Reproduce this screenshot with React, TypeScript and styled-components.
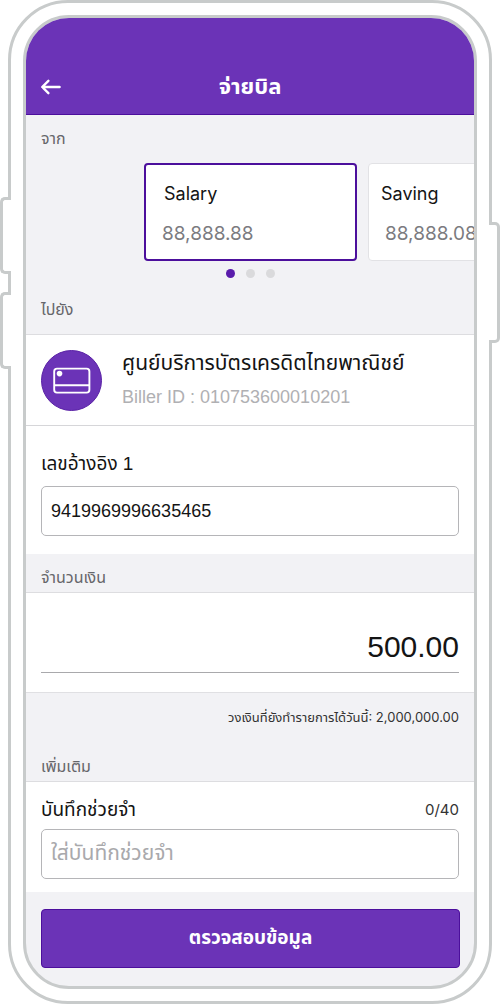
import React, { useState } from "react";
import styled, { createGlobalStyle } from "styled-components";

const purple = "#6b33b7";
const deepPurple = "#4c0f9c";
const frameGray = "#c8cbcb";
const numeric = `Inter, "Noto Sans Thai", sans-serif`;

const GlobalStyle = createGlobalStyle`
  *, *::before, *::after { box-sizing: border-box; }
  body {
    margin: 0;
    background: #fff;
    color: #141414;
    font-family: "Liberation Sans", "Noto Sans Thai", sans-serif;
  }
  button, input { font: inherit; color: inherit; }
  h1, h2, p { margin: 0; font-weight: 400; }
`;

const Stage = styled.div`
  padding: 0 8px;
`;

const Phone = styled.div`
  position: relative;
  padding: 12px;
  border: 3px solid ${frameGray};
  border-radius: 60px;
  background: #fff;
`;

const SideKey = styled.span<{ $side: "left" | "right"; $top: number; $height: number }>`
  position: absolute;
  top: ${(p) => p.$top}px;
  ${(p) => p.$side}: -11px;
  width: 11px;
  height: ${(p) => p.$height}px;
  background: #fff;
  border: 3px solid ${frameGray};
  border-${(p) => (p.$side === "left" ? "right" : "left")}: 0;
  border-radius: ${(p) => (p.$side === "left" ? "5px 0 0 5px" : "0 5px 5px 0")};
`;

const Screen = styled.main`
  overflow: hidden;
  border: 3px solid ${frameGray};
  border-radius: 46px;
  background: #f2f2f5;
`;

const Header = styled.header`
  display: grid;
  grid-template-columns: 40px 1fr 40px;
  align-items: center;
  height: 97px;
  padding: 42px 6px 0;
  border-bottom: 1px solid ${deepPurple};
  background: ${purple};
  color: #fff;
`;

const BackButton = styled.button`
  display: flex;
  padding: 8px;
  border: 0;
  background: none;
`;

const Title = styled.h1`
  text-align: center;
  font-size: 22px;
  line-height: 32px;
  font-weight: 700;
`;

const SectionTitle = styled.h2<{ $height: number; $bottom?: number }>`
  display: flex;
  align-items: flex-end;
  height: ${(p) => p.$height}px;
  padding: 0 15px ${(p) => p.$bottom ?? 4}px;
  font-size: 16px;
  line-height: 20px;
  color: #66666a;
`;

const Carousel = styled.div`
  display: flex;
  gap: 11px;
  padding-left: calc(50% - 106px);
  overflow: hidden;
`;

const Account = styled.button<{ $active?: boolean }>`
  flex: 0 0 213px;
  height: 98px;
  padding: ${(p) => (p.$active ? "3px 16px 0" : "3px 10px 0")};
  border: ${(p) => (p.$active ? `2px solid ${deepPurple}` : "1px solid #e2e2e5")};
  border-radius: 4px;
  background: #fff;
  font-family: ${numeric};
  text-align: left;
`;

const AccountName = styled.span`
  display: block;
  padding-left: 2px;
  font-size: 18px;
  line-height: 40px;
`;

const Balance = styled.span<{ $indent?: boolean }>`
  display: block;
  padding-left: ${(p) => (p.$indent ? 6 : 0)}px;
  font-size: 19px;
  line-height: 40px;
  color: #7b7b7f;
`;

const Dots = styled.div`
  display: flex;
  justify-content: center;
  gap: 11px;
  padding-top: 8px;
`;

const Dot = styled.span<{ $active?: boolean }>`
  width: 9px;
  height: 9px;
  border-radius: 50%;
  background: ${(p) => (p.$active ? "#5a1cab" : "#dadadc")};
`;

const Panel = styled.section`
  border-top: 1px solid #dddde0;
  background: #fff;
`;

const Biller = styled.div`
  display: flex;
  align-items: center;
  gap: 20px;
  height: 91px;
  padding: 0 15px;
  border-bottom: 1px solid #d6d6d9;
`;

const BillerName = styled.p`
  font-size: 21px;
  line-height: 34px;
  white-space: nowrap;
`;

const BillerId = styled.p`
  font-size: 18px;
  line-height: 34px;
  color: #b0b0b3;
  white-space: nowrap;
`;

const Field = styled.div<{ $top: number; $bottom: number }>`
  padding: ${(p) => p.$top}px 15px ${(p) => p.$bottom}px;
`;

const LabelRow = styled.div<{ $gap: number }>`
  display: flex;
  justify-content: space-between;
  align-items: center;
  height: 34px;
  margin-bottom: ${(p) => p.$gap}px;
`;

const Label = styled.label`
  font-size: 19px;
  line-height: 34px;
`;

const Counter = styled.span`
  font-family: ${numeric};
  font-size: 15px;
  line-height: 34px;
  color: #333;
`;

const TextInput = styled.input`
  display: block;
  width: 100%;
  height: 50px;
  padding: 0 9px;
  border: 1px solid #b5b5b8;
  border-radius: 5px;
  background: #fff;
  font-size: 18px;
  &::placeholder { color: #a9a9ac; opacity: 1; font-size: 21px; }
`;

const AmountBox = styled.div`
  padding: 0 15px 19px;
  border-bottom: 1px solid #e0e0e3;
`;

const Amount = styled.input`
  display: block;
  width: 100%;
  height: 80px;
  padding: 28px 0 0;
  border: 0;
  border-bottom: 1px solid #a9a9ac;
  background: none;
  font-size: 30px;
  text-align: right;
`;

const Limit = styled.p`
  padding: 14px 15px 0;
  font-family: ${numeric};
  font-size: 13px;
  line-height: 20px;
  text-align: right;
  color: #333;
`;

const Footer = styled.footer`
  padding: 17px 14px 18px 15px;
`;

const Submit = styled.button`
  display: block;
  width: 100%;
  height: 59px;
  border: 1px solid ${deepPurple};
  border-radius: 4px;
  background: ${purple};
  color: #fff;
  font-size: 19px;
  font-weight: 700;
`;

function BackArrow() {
  return (
    <svg width="22" height="18" viewBox="0 0 22 18" fill="none" stroke="#fff" strokeWidth="2.4" strokeLinecap="round" strokeLinejoin="round" aria-hidden="true">
      <path d="M19.600 9H2.500M8.400 2.800 2.200 9l6.200 6.200" />
    </svg>
  );
}

function CardBadge() {
  return (
    <svg width="61" height="61" viewBox="0 0 61 61" fill="none" aria-hidden="true">
      <circle cx="30.500" cy="30.500" r="30" fill={purple} stroke="#5a22a6" />
      <rect x="13.200" y="18.600" width="35.200" height="24" rx="2.800" stroke="#fff" strokeWidth="1.900" />
      <path d="M13.500 35.300h34.600" stroke="#fff" strokeWidth="1.900" />
      <circle cx="18.500" cy="23.600" r="2.800" fill="#fff" />
    </svg>
  );
}

export default function App() {
  const [reference, setReference] = useState("9419969996635465");
  const [amount, setAmount] = useState("500.00");
  const [memo, setMemo] = useState("");

  return (
    <>
      <GlobalStyle />
      <Stage>
        <Phone>
          <SideKey $side="left" $top={194} $height={77} />
          <SideKey $side="left" $top={289} $height={77} />
          <SideKey $side="right" $top={219} $height={121} />
          <Screen>
            <Header>
              <BackButton type="button" aria-label="ย้อนกลับ"><BackArrow /></BackButton>
              <Title>จ่ายบิล</Title>
            </Header>

            <SectionTitle $height={48} $bottom={14}>จาก</SectionTitle>
            <Carousel>
              <Account type="button" $active>
                <AccountName>Salary</AccountName>
                <Balance>88,888.88</Balance>
              </Account>
              <Account type="button">
                <AccountName>Saving</AccountName>
                <Balance $indent>88,888.08</Balance>
              </Account>
            </Carousel>
            <Dots>
              <Dot $active />
              <Dot />
              <Dot />
            </Dots>
            <SectionTitle $height={56} $bottom={14}>ไปยัง</SectionTitle>

            <Panel>
              <Biller>
                <CardBadge />
                <div>
                  <BillerName>ศูนย์บริการบัตรเครดิตไทยพาณิชย์</BillerName>
                  <BillerId>Biller ID : 010753600010201</BillerId>
                </div>
              </Biller>
              <Field $top={21} $bottom={18}>
                <LabelRow $gap={5}><Label htmlFor="reference">เลขอ้างอิง 1</Label></LabelRow>
                <TextInput id="reference" value={reference} onChange={(e) => setReference(e.target.value)} />
              </Field>
            </Panel>

            <SectionTitle as="label" htmlFor="amount" $height={38}>จำนวนเงิน</SectionTitle>
            <Panel>
              <AmountBox>
                <Amount id="amount" value={amount} onChange={(e) => setAmount(e.target.value)} />
              </AmountBox>
            </Panel>
            <Limit>วงเงินที่ยังทำรายการได้วันนี้: 2,000,000.00</Limit>
            <SectionTitle $height={54}>เพิ่มเติม</SectionTitle>

            <Panel>
              <Field $top={11} $bottom={13}>
                <LabelRow $gap={2}>
                  <Label htmlFor="memo">บันทึกช่วยจำ</Label>
                  <Counter>{memo.length}/40</Counter>
                </LabelRow>
                <TextInput id="memo" maxLength={40} placeholder="ใส่บันทึกช่วยจำ" value={memo} onChange={(e) => setMemo(e.target.value)} />
              </Field>
            </Panel>
            <Footer>
              <Submit type="button">ตรวจสอบข้อมูล</Submit>
            </Footer>
          </Screen>
        </Phone>
      </Stage>
    </>
  );
}
